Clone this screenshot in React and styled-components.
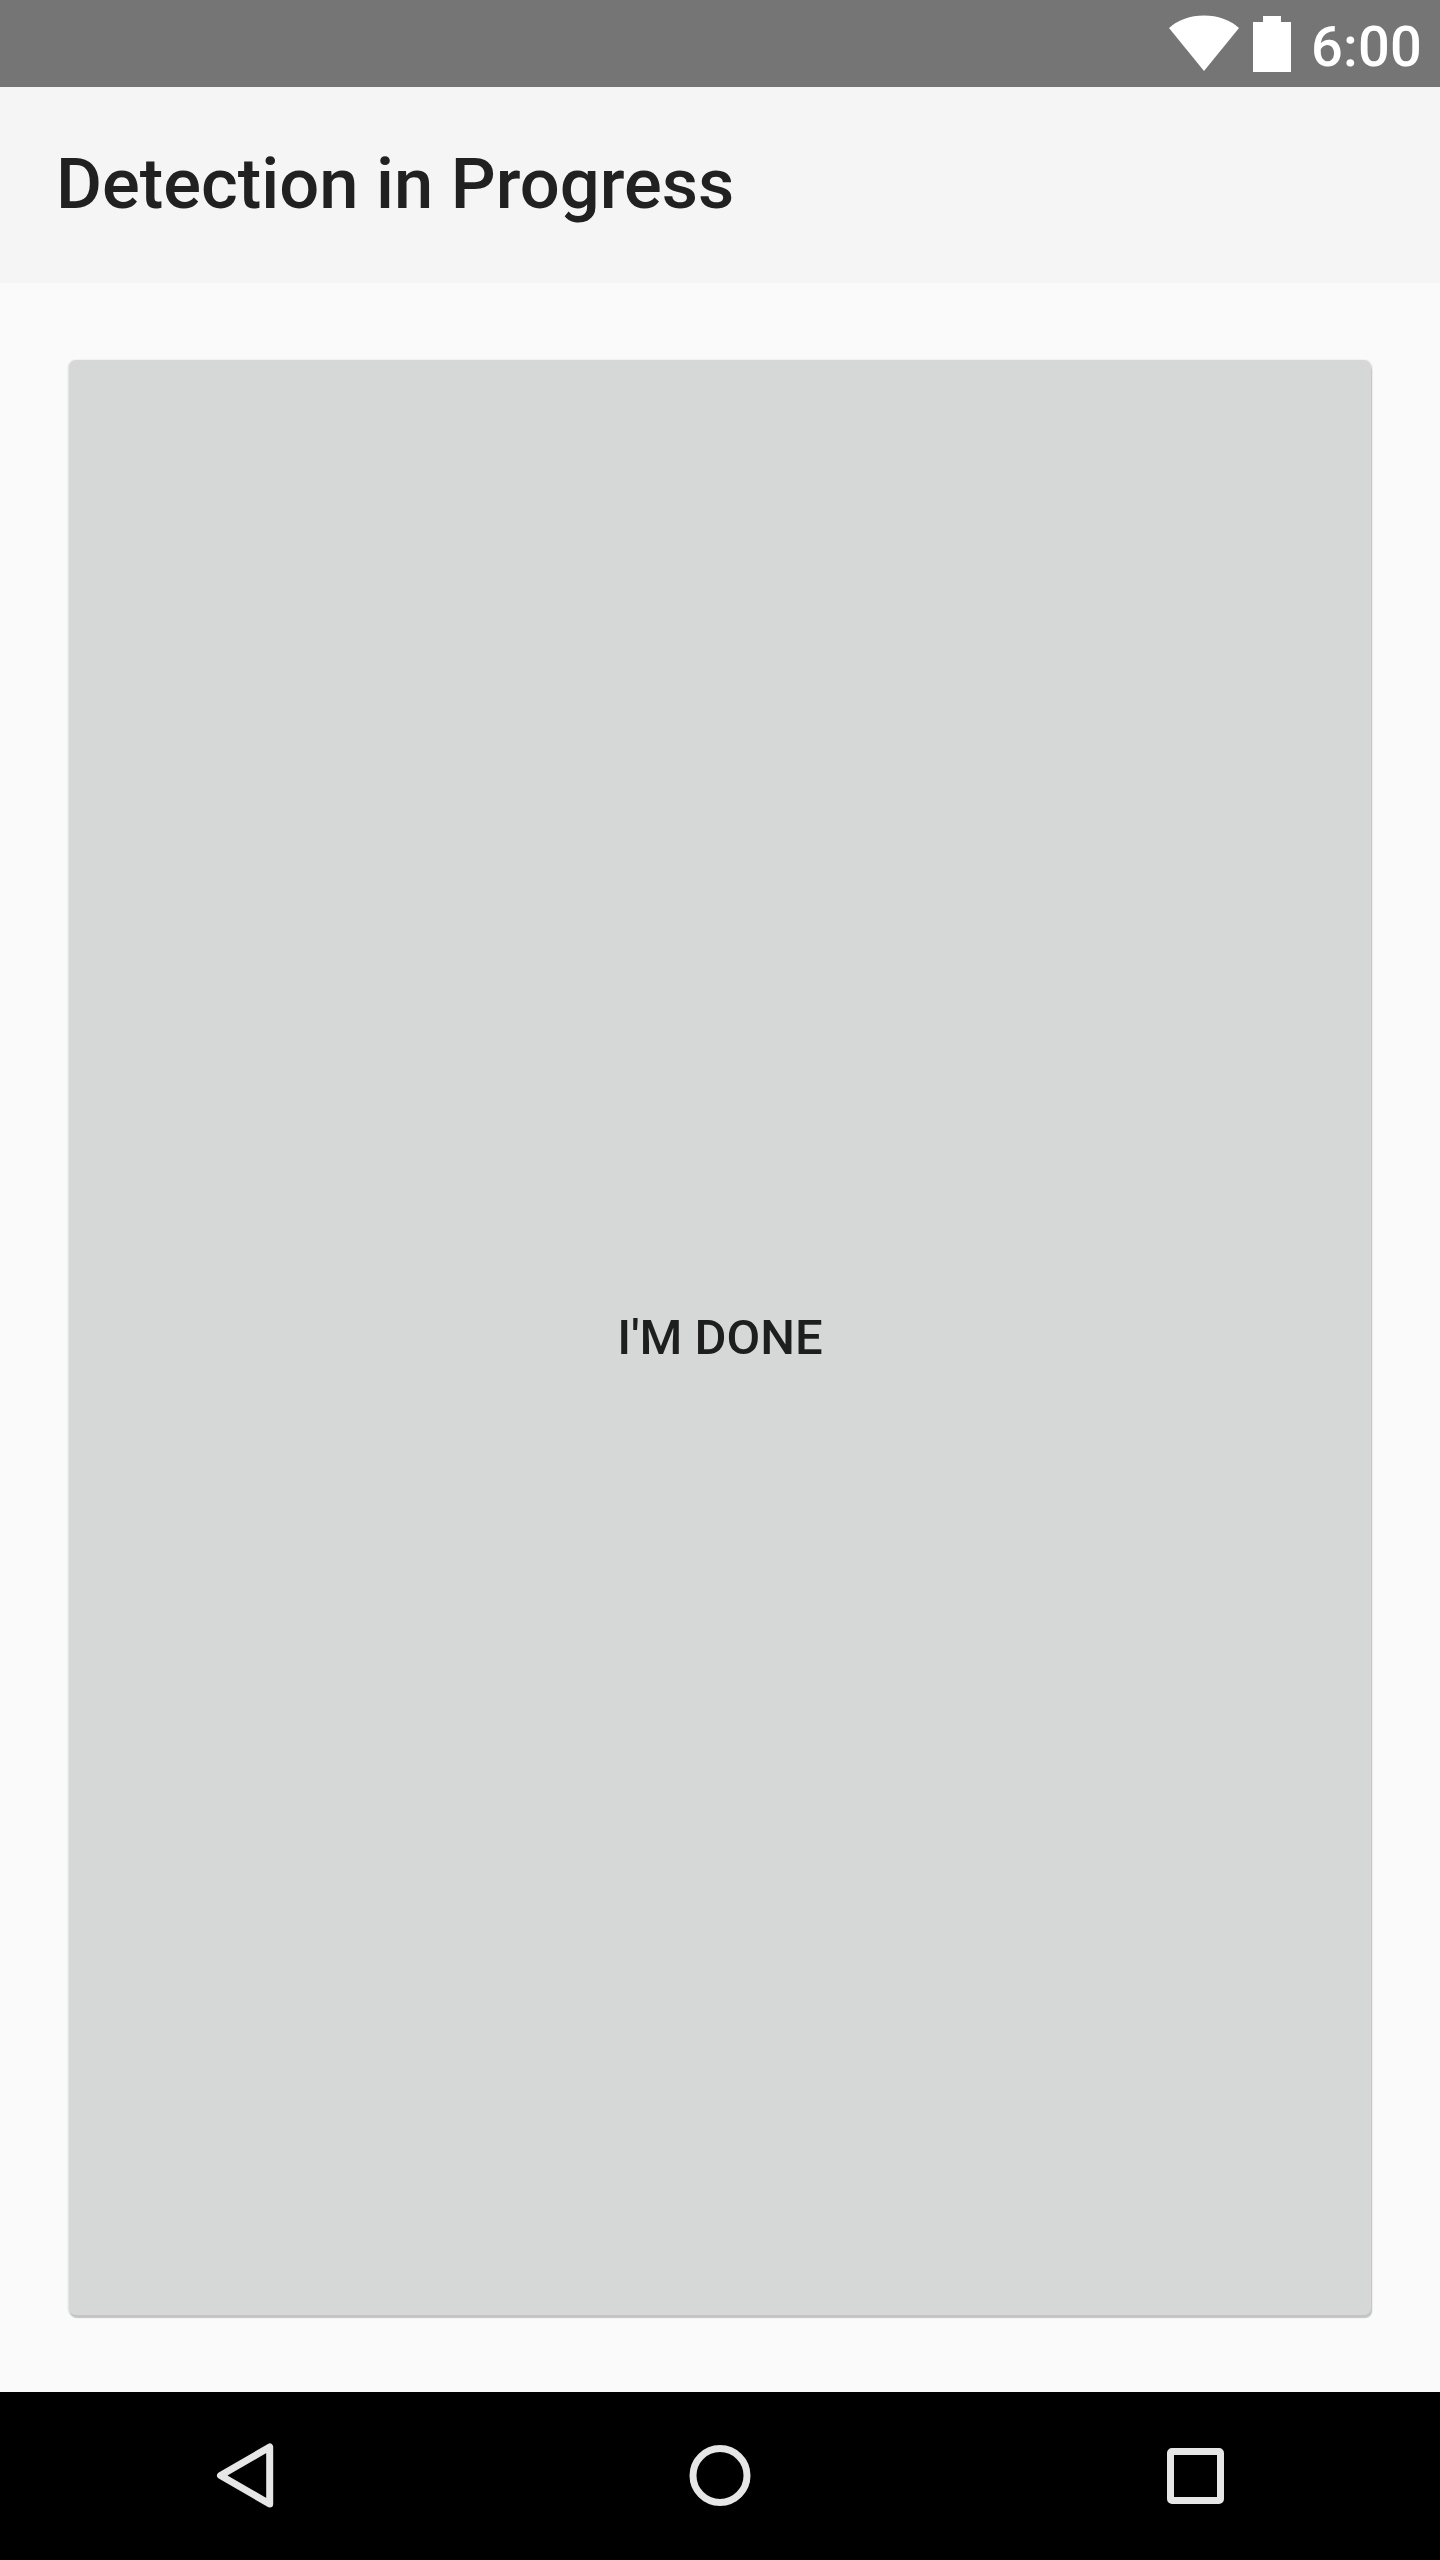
import React from 'react';
import styled, { createGlobalStyle } from 'styled-components';

const Global = createGlobalStyle`
  body { margin: 0; background: #fafafa; font-family: Roboto, sans-serif; }
`;
const Screen = styled.div`
  width: 1440px; height: 2560px; display: flex; flex-direction: column; background: #fafafa; overflow: hidden;
`;
const StatusBar = styled.div`
  height: 87px; flex: none; display: flex; justify-content: flex-end; background: #757575; color: #fff;
`;
const StatusIcons = styled.svg`
  width: 130px; height: 87px; display: block;
`;
const Clock = styled.span`
  box-sizing: border-box; width: 142px; padding-left: 13px; font-size: 56px; line-height: 94px; font-weight: 500; letter-spacing: .2px; white-space: nowrap;
`;
const AppBar = styled.header`
  height: 196px; flex: none; box-sizing: border-box; padding: 0 0 2px 56px; display: flex; align-items: center; background: #f5f5f5;
`;
const Title = styled.h1`
  margin: 0; font-size: 70.5px; line-height: 82px; font-weight: 500; color: #212121; white-space: nowrap;
`;
const Content = styled.main`
  flex: 1; min-height: 0; box-sizing: border-box; padding: 77px 69px 77px 69px; display: flex;
`;
const DoneButton = styled.button`
  flex: 1; border: 0; padding: 0; border-radius: 7px; background: #d6d8d7; color: #1e1e1e;
  font: 500 49px/58px Roboto, sans-serif;
  box-shadow: 1px 3px 1px #c4c4c4, 0 1px 2px 1px rgba(0,0,0,.12);
`;
const NavBar = styled.nav`
  height: 168px; flex: none; display: flex; justify-content: center; background: #000;
`;
const NavItem = styled.div`
  width: 475px; height: 168px; display: flex; justify-content: center;
`;
const NavIcon = styled.svg`
  width: 100px; height: 168px; display: block; fill: none; stroke: #e6e6e6; stroke-width: 7; stroke-linejoin: round;
`;

export default function App() {
  return (
    <Screen>
      <Global />
      <StatusBar>
        <StatusIcons viewBox="1168 0 130 87" fill="#fff">
          <path d="M1169 28Q1183 15.5 1204 15.5T1239 28L1204 71Z" />
          <path d="M1253 22h10v-6h18v6h10v50h-38z" />
        </StatusIcons>
        <Clock>6:00</Clock>
      </StatusBar>
      <AppBar><Title>Detection in Progress</Title></AppBar>
      <Content><DoneButton>I'M DONE</DoneButton></Content>
      <NavBar>
        <NavItem><NavIcon viewBox="195 2392 100 168"><path d="M220.5 2475.5L269.7 2447V2504Z" /></NavIcon></NavItem>
        <NavItem><NavIcon viewBox="670 2392 100 168"><circle cx="720" cy="2475.5" r="27" /></NavIcon></NavItem>
        <NavItem><NavIcon viewBox="1145 2392 100 168"><rect x="1170.5" y="2451.5" width="50" height="49" rx="1.5" /></NavIcon></NavItem>
      </NavBar>
    </Screen>
  );
}
